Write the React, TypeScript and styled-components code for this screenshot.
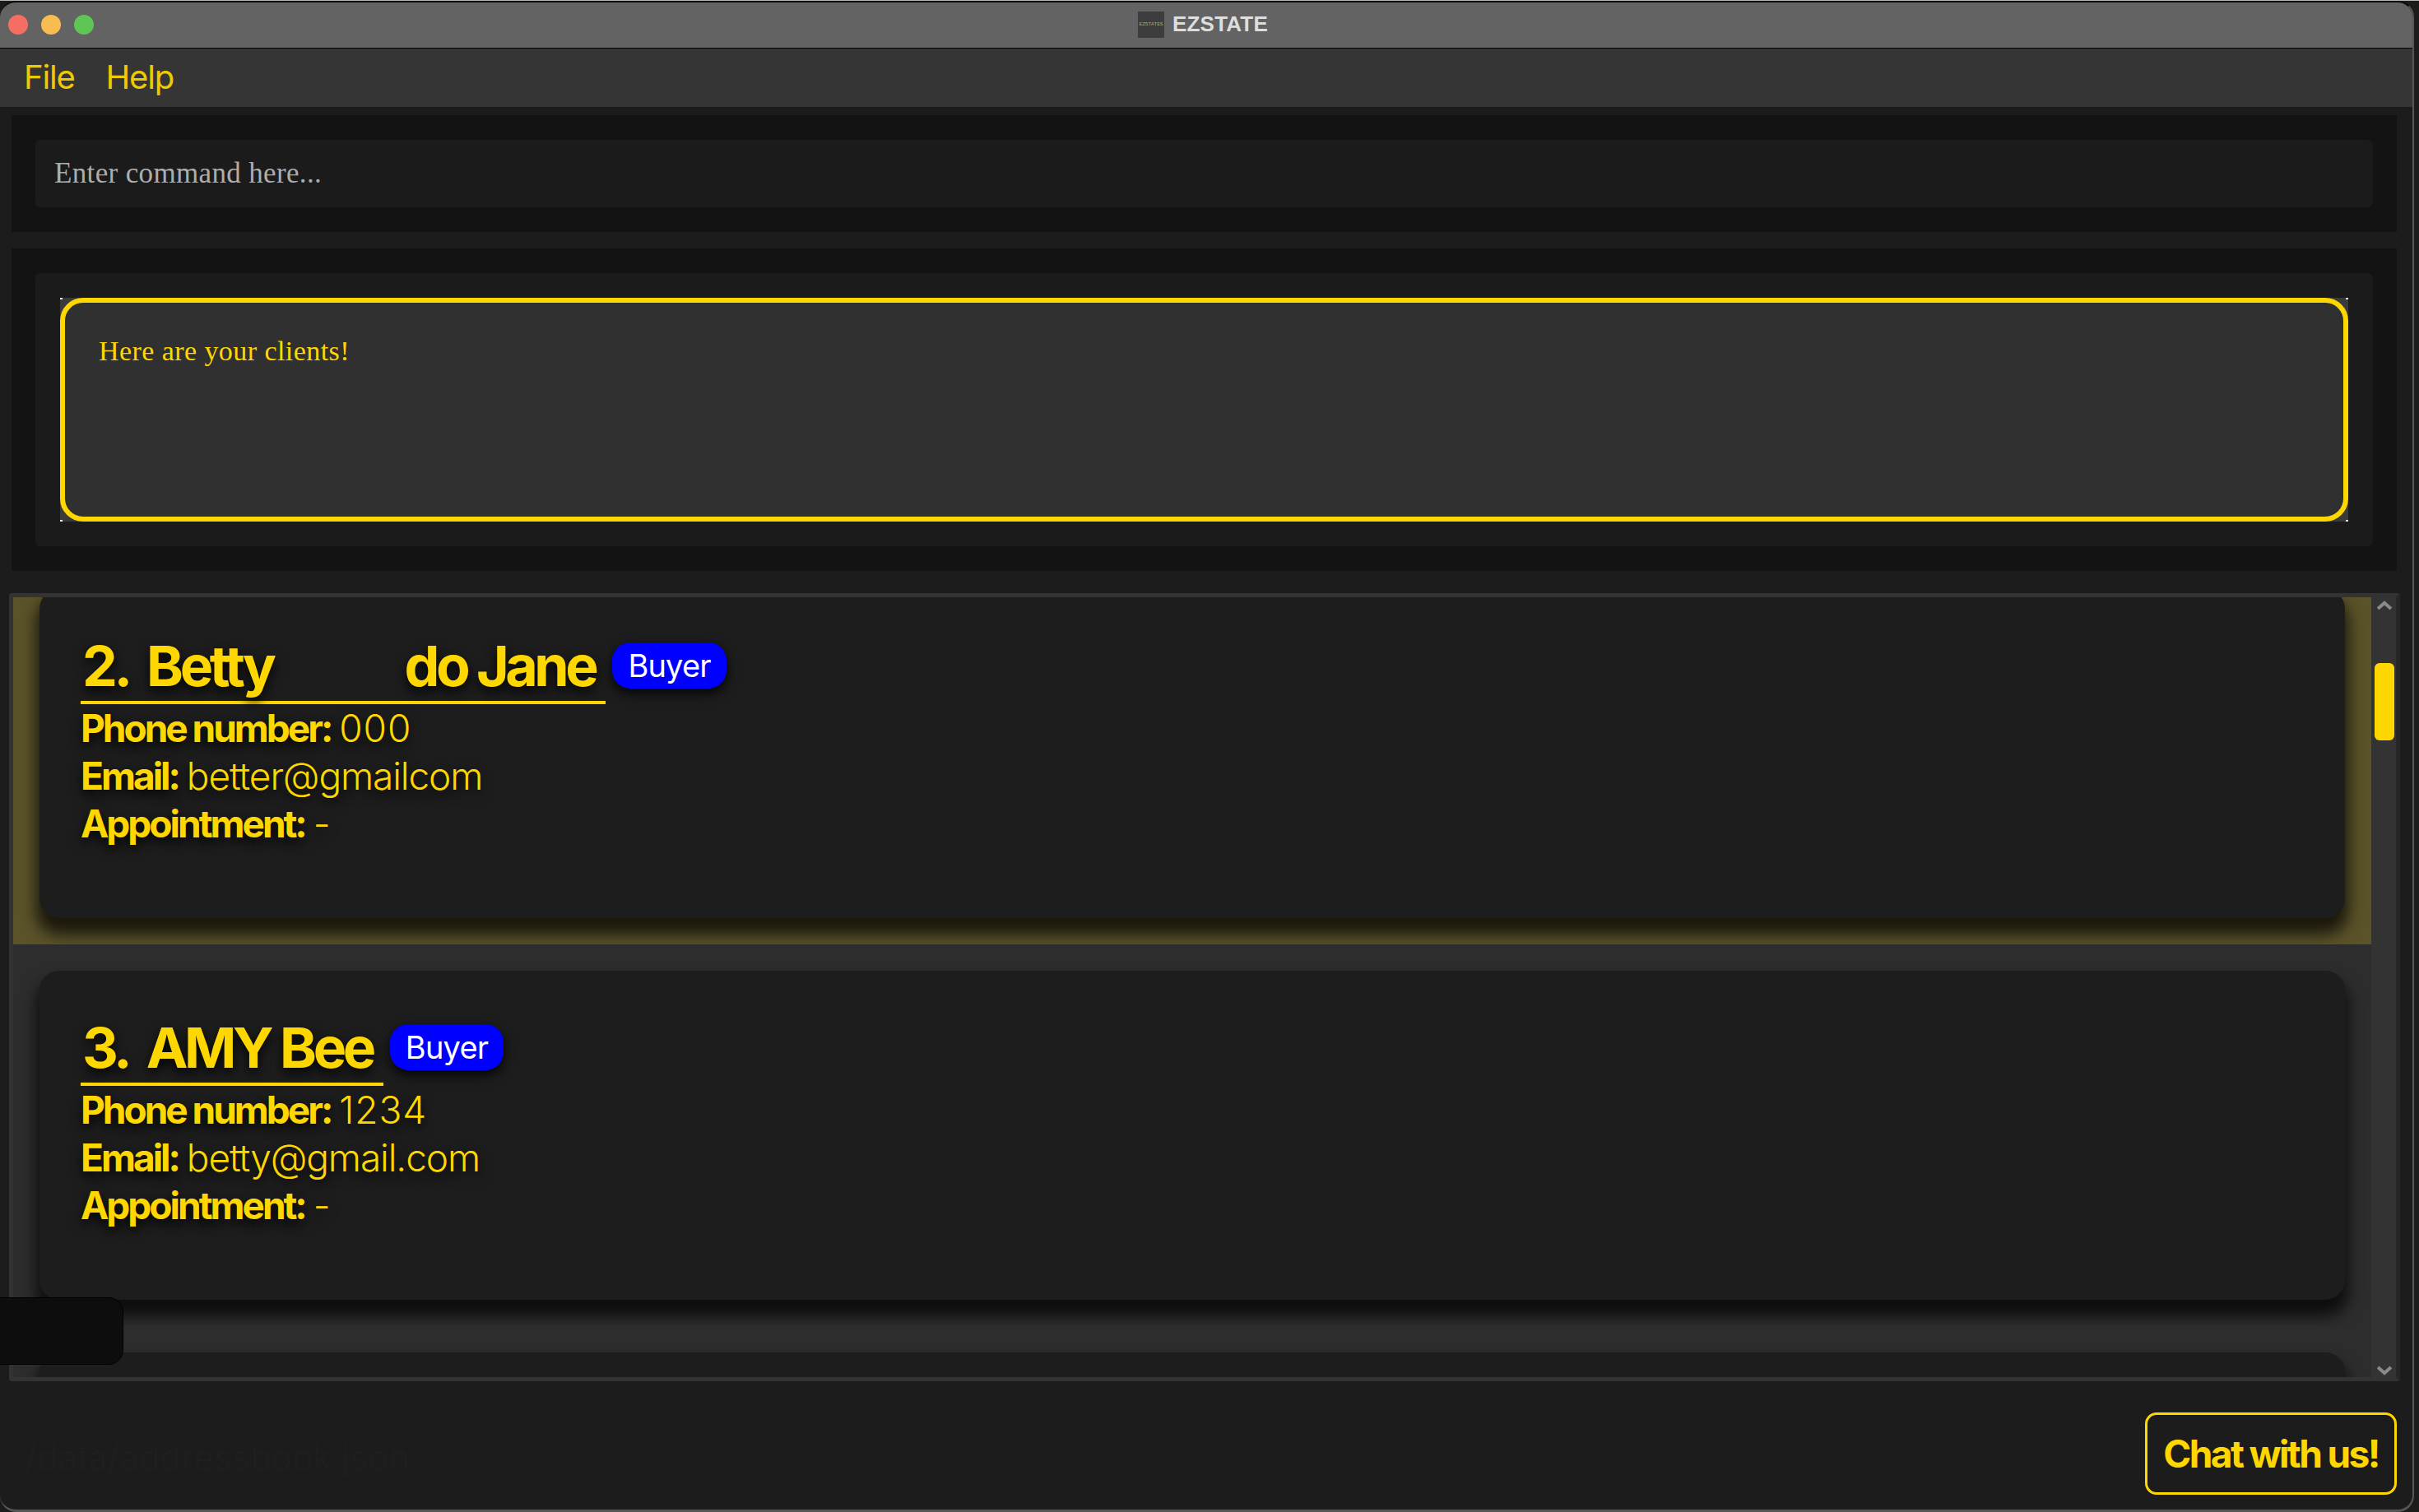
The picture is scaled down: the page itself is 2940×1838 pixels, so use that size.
import React, { FC } from 'react';
import styled, { createGlobalStyle } from 'styled-components';

const GOLD = '#ffd700';

const GlobalStyle = createGlobalStyle`
  html, body {
    margin: 0;
    padding: 0;
    background: #1a1a14;
  }
  * {
    box-sizing: border-box;
  }
`;

const Desktop = styled.div`
  width: 2940px;
  height: 1838px;
  overflow: hidden;
  background: #1c1c1a;
  border-top: 1px solid #b8b8b2;
  position: relative;
  font-family: Inter, 'Liberation Sans', sans-serif;
`;

const AppWindow = styled.div`
  width: 2934px;
  height: 1837px;
  display: flex;
  flex-direction: column;
  overflow: hidden;
  background: #1c1c1c;
  border-top: 2px solid #0c0c0c;
  border-right: 2px solid #565656;
  border-bottom: 3px solid #565656;
  border-radius: 20px;
  position: relative;
`;

const TitleBar = styled.div`
  height: 56px;
  flex: none;
  display: flex;
  align-items: center;
  justify-content: center;
  position: relative;
  padding: 0 8px 2px 0;
  background: #636363;
  border-bottom: 1px solid #000;
`;

const Lights = styled.div`
  position: absolute;
  left: 10px;
  top: 15px;
  display: flex;
  gap: 16px;
`;

const Light = styled.span<{ $color: string }>`
  width: 24px;
  height: 24px;
  border-radius: 50%;
  background: ${(p) => p.$color};
`;

const AppIcon = styled.div`
  width: 32px;
  height: 32px;
  margin-right: 10px;
  background: #3d3d3d;
  color: #a9a976;
  font-family: 'Liberation Mono', monospace;
  font-size: 6px;
  line-height: 32px;
  text-align: center;
  white-space: nowrap;
  overflow: hidden;
`;

const AppTitle = styled.div`
  font-family: 'Liberation Sans', sans-serif;
  font-weight: 700;
  font-size: 26px;
  letter-spacing: 0.2px;
  color: #dedede;
`;

const MenuBar = styled.div`
  height: 71px;
  flex: none;
  display: flex;
  align-items: center;
  gap: 38px;
  padding: 0 0 2px 29px;
  background: #353535;
  color: #eeca00;
  font-size: 40px;
  letter-spacing: -1.2px;
`;

const Content = styled.div`
  flex: 1;
  display: flex;
  flex-direction: column;
  padding-top: 10px;
`;

const Section = styled.div<{ $height: number }>`
  width: 2899px;
  height: ${(p) => p.$height}px;
  margin: 0 0 20px 14px;
  padding: 30px 29px;
  background: #131313;
`;

const Inset = styled.div`
  height: 100%;
  border-radius: 6px;
  background: #1b1b1b;
`;

const CommandInset = styled(Inset)`
  display: flex;
  align-items: center;
  padding-left: 23px;
  color: #adadad;
  font-family: 'Liberation Serif', serif;
  font-size: 35px;
  letter-spacing: 0.35px;
`;

const ResultInset = styled(Inset)`
  padding: 30px;
`;

const ResultFrame = styled.div`
  height: 100%;
  background:
    linear-gradient(#e8e8e8, #e8e8e8) 0 0 / 3px 2px no-repeat,
    linear-gradient(#e8e8e8, #e8e8e8) 100% 0 / 3px 2px no-repeat,
    linear-gradient(#e8e8e8, #e8e8e8) 0 100% / 3px 2px no-repeat,
    linear-gradient(#e8e8e8, #e8e8e8) 100% 100% / 3px 2px no-repeat,
    #3a3a3a;
`;

const ResultBox = styled.div`
  height: 100%;
  padding: 39px 41px;
  border: 6px solid ${GOLD};
  border-radius: 28px;
  background: #303030;
  color: ${GOLD};
  font-family: 'Liberation Serif', serif;
  font-size: 34px;
  line-height: 40px;
  letter-spacing: 0.43px;
`;

const ListPanel = styled.div`
  width: 2906px;
  height: 958px;
  margin: 7px 0 0 11px;
  flex: none;
  display: flex;
  border: 5px solid #333;
  border-right-color: #262626;
  border-radius: 4px;
  overflow: hidden;
  background: #2d2d2d;
`;

const Rows = styled.div`
  flex: 1;
  min-width: 0;
  overflow: hidden;
`;

const Row = styled.div<{ $selected?: boolean; $first?: boolean }>`
  height: 464px;
  flex: none;
  padding: 32px;
  margin-top: ${(p) => (p.$first ? '-42px' : '0')};
  background: ${(p) => (p.$selected ? '#5a5229' : '#2d2d2d')};
`;

const Card = styled.div`
  height: 400px;
  padding: 48px 50px 0;
  border-radius: 24px;
  background: #1d1d1d;
  box-shadow: 0 16px 18px 4px rgba(0, 0, 0, 0.7);
  color: ${GOLD};
`;

const NameRow = styled.div`
  display: flex;
  align-items: flex-start;
  gap: 8px;
`;

const Name = styled.div`
  height: 92px;
  padding: 0 13px 0 2px;
  border-bottom: 4px solid ${GOLD};
  font-size: 68px;
  font-weight: 700;
  line-height: 90px;
  letter-spacing: -4.4px;
  white-space: pre;
  text-shadow: 0 6px 14px rgba(0, 0, 0, 0.9);
`;

const NameGap = styled.span`
  display: inline-block;
  width: 160px;
`;

const Badge = styled.div`
  height: 56px;
  margin-top: 17px;
  padding: 0 19px;
  border-radius: 22px;
  background: #0000ff;
  box-shadow: 0 6px 14px rgba(0, 0, 0, 0.85);
  color: #fff;
  font-size: 38px;
  line-height: 56px;
  letter-spacing: -0.8px;
`;

const Field = styled.div`
  font-size: 46px;
  line-height: 58px;
  font-weight: 300;
  text-shadow: 0 6px 14px rgba(0, 0, 0, 0.9);
`;

const FieldLabel = styled.span`
  font-weight: 700;
  letter-spacing: -3px;
`;

const FieldValue = styled.span<{ $digits?: boolean }>`
  margin-left: -3px;
  letter-spacing: ${(p) => (p.$digits ? '0.9px' : '-1.1px')};
`;

const ScrollTrack = styled.div`
  width: 30px;
  flex: none;
  position: relative;
  background: #333;
`;

const Arrow = styled.svg<{ $bottom?: boolean }>`
  position: absolute;
  left: 7px;
  ${(p) => (p.$bottom ? 'bottom: 2px;' : 'top: 4px;')}
  filter: blur(0.5px);
`;

const ScrollThumb = styled.div`
  position: absolute;
  left: 4px;
  top: 80px;
  width: 24px;
  height: 94px;
  border-radius: 6px;
  background: ${GOLD};
`;

const Tooltip = styled.div`
  position: absolute;
  left: -2px;
  top: 1574px;
  width: 152px;
  height: 82px;
  border: 1px solid #000;
  border-radius: 0 18px 18px 0;
  background: #0d0d0d;
`;

const Footer = styled.div`
  flex: 1;
  display: flex;
  justify-content: space-between;
  padding: 38px 19px 15px 30px;
`;

const SavePath = styled.div`
  align-self: center;
  margin-top: 6px;
  color: #1f1f1f;
  font-size: 42px;
  font-weight: 300;
  letter-spacing: 0.4px;
`;

const ChatButton = styled.div`
  width: 306px;
  height: 100px;
  display: flex;
  align-items: center;
  justify-content: center;
  border: 3px solid ${GOLD};
  border-radius: 14px;
  color: ${GOLD};
  font-size: 46px;
  font-weight: 700;
  letter-spacing: -2.6px;
`;

interface IClient {
  index: string;
  name: React.ReactNode;
  phone: string;
  email: string;
  selected?: boolean;
  first?: boolean;
}

const ClientRow: FC<IClient> = (props: IClient) => {
  return (
    <Row $selected={props.selected} $first={props.first}>
      <Card>
        <NameRow>
          <Name>
            {props.index}
            {'  '}
            {props.name}
          </Name>
          <Badge>Buyer</Badge>
        </NameRow>
        <Field>
          <FieldLabel>Phone number:</FieldLabel> <FieldValue $digits>{props.phone}</FieldValue>
        </Field>
        <Field>
          <FieldLabel>Email:</FieldLabel> <FieldValue>{props.email}</FieldValue>
        </Field>
        <Field>
          <FieldLabel>Appointment:</FieldLabel> <FieldValue>-</FieldValue>
        </Field>
      </Card>
    </Row>
  );
};

const App: FC = () => {
  return (
    <>
      <GlobalStyle />
      <Desktop>
        <AppWindow>
          <TitleBar>
            <Lights>
              <Light $color="#f56e63" />
              <Light $color="#f7bd50" />
              <Light $color="#5ec654" />
            </Lights>
            <AppIcon>EZSTATES</AppIcon>
            <AppTitle>EZSTATE</AppTitle>
          </TitleBar>
          <MenuBar>
            <span>File</span>
            <span>Help</span>
          </MenuBar>
          <Content>
            <Section $height={142}>
              <CommandInset>Enter command here...</CommandInset>
            </Section>
            <Section $height={392}>
              <ResultInset>
                <ResultFrame>
                  <ResultBox>Here are your clients!</ResultBox>
                </ResultFrame>
              </ResultInset>
            </Section>
            <ListPanel>
              <Rows>
                <ClientRow
                  first
                  selected
                  index="2."
                  name={
                    <>
                      Betty
                      <NameGap />
                      do Jane
                    </>
                  }
                  phone="000"
                  email="better@gmailcom"
                />
                <ClientRow index="3." name="AMY Bee" phone="1234" email="betty@gmail.com" />
                <Row>
                  <Card />
                </Row>
              </Rows>
              <ScrollTrack>
                <Arrow width="18" height="12" viewBox="0 0 18 12">
                  <polyline points="1,10 9,3 17,10" fill="none" stroke="#8a8a8a" strokeWidth="4" />
                </Arrow>
                <ScrollThumb />
                <Arrow $bottom width="18" height="12" viewBox="0 0 18 12">
                  <polyline points="1,2 9,9 17,2" fill="none" stroke="#8a8a8a" strokeWidth="4" />
                </Arrow>
              </ScrollTrack>
            </ListPanel>
            <Footer>
              <SavePath>/data/addressbook.json</SavePath>
              <ChatButton>Chat with us!</ChatButton>
            </Footer>
          </Content>
          <Tooltip />
        </AppWindow>
      </Desktop>
    </>
  );
};

export default App;
